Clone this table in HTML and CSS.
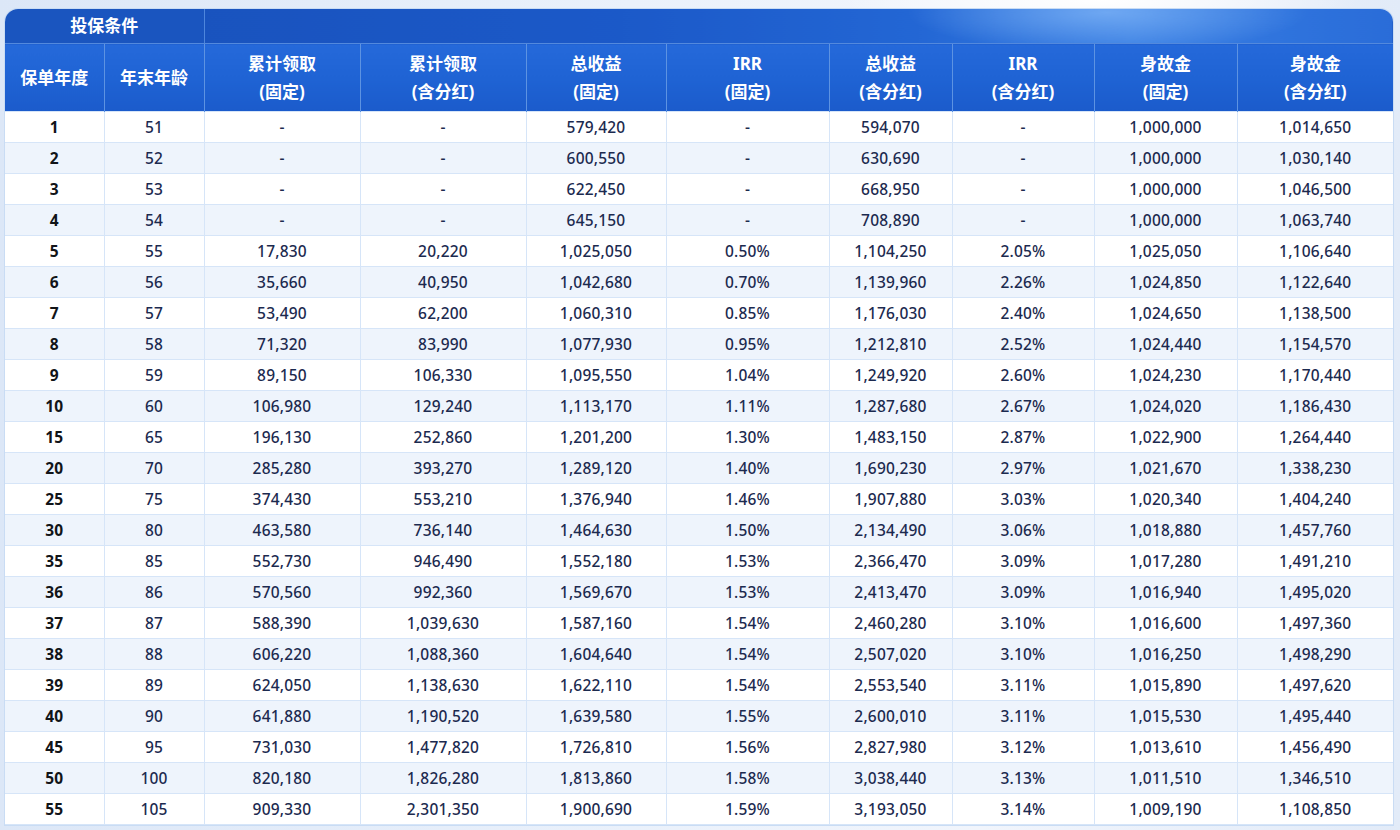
FILE: index.html
```html
<!DOCTYPE html>
<html lang="zh">
<head>
<meta charset="utf-8">
<link rel="stylesheet" href="styles.css">
</head>
<body>
<div class="page">
  <div class="card">
    <table class="grid">
      <colgroup>
        <col class="c1"><col class="c2"><col class="c3"><col class="c4"><col class="c5">
        <col class="c6"><col class="c7"><col class="c8"><col class="c9"><col class="c10">
      </colgroup>
      <thead>
        <tr class="h1">
          <th colspan="2" class="cond">投保条件</th>
          <th colspan="8" class="blank"></th>
        </tr>
        <tr class="h2">
          <th>保单年度</th>
          <th>年末年龄</th>
          <th>累计领取<br>(固定)</th>
          <th>累计领取<br>(含分红)</th>
          <th>总收益<br>(固定)</th>
          <th>IRR<br>(固定)</th>
          <th>总收益<br>(含分红)</th>
          <th>IRR<br>(含分红)</th>
          <th>身故金<br>(固定)</th>
          <th>身故金<br>(含分红)</th>
        </tr>
      </thead>
      <tbody>
        <tr><td>1</td><td>51</td><td>-</td><td>-</td><td>579,420</td><td>-</td><td>594,070</td><td>-</td><td>1,000,000</td><td>1,014,650</td></tr>
        <tr><td>2</td><td>52</td><td>-</td><td>-</td><td>600,550</td><td>-</td><td>630,690</td><td>-</td><td>1,000,000</td><td>1,030,140</td></tr>
        <tr><td>3</td><td>53</td><td>-</td><td>-</td><td>622,450</td><td>-</td><td>668,950</td><td>-</td><td>1,000,000</td><td>1,046,500</td></tr>
        <tr><td>4</td><td>54</td><td>-</td><td>-</td><td>645,150</td><td>-</td><td>708,890</td><td>-</td><td>1,000,000</td><td>1,063,740</td></tr>
        <tr><td>5</td><td>55</td><td>17,830</td><td>20,220</td><td>1,025,050</td><td>0.50%</td><td>1,104,250</td><td>2.05%</td><td>1,025,050</td><td>1,106,640</td></tr>
        <tr><td>6</td><td>56</td><td>35,660</td><td>40,950</td><td>1,042,680</td><td>0.70%</td><td>1,139,960</td><td>2.26%</td><td>1,024,850</td><td>1,122,640</td></tr>
        <tr><td>7</td><td>57</td><td>53,490</td><td>62,200</td><td>1,060,310</td><td>0.85%</td><td>1,176,030</td><td>2.40%</td><td>1,024,650</td><td>1,138,500</td></tr>
        <tr><td>8</td><td>58</td><td>71,320</td><td>83,990</td><td>1,077,930</td><td>0.95%</td><td>1,212,810</td><td>2.52%</td><td>1,024,440</td><td>1,154,570</td></tr>
        <tr><td>9</td><td>59</td><td>89,150</td><td>106,330</td><td>1,095,550</td><td>1.04%</td><td>1,249,920</td><td>2.60%</td><td>1,024,230</td><td>1,170,440</td></tr>
        <tr><td>10</td><td>60</td><td>106,980</td><td>129,240</td><td>1,113,170</td><td>1.11%</td><td>1,287,680</td><td>2.67%</td><td>1,024,020</td><td>1,186,430</td></tr>
        <tr><td>15</td><td>65</td><td>196,130</td><td>252,860</td><td>1,201,200</td><td>1.30%</td><td>1,483,150</td><td>2.87%</td><td>1,022,900</td><td>1,264,440</td></tr>
        <tr><td>20</td><td>70</td><td>285,280</td><td>393,270</td><td>1,289,120</td><td>1.40%</td><td>1,690,230</td><td>2.97%</td><td>1,021,670</td><td>1,338,230</td></tr>
        <tr><td>25</td><td>75</td><td>374,430</td><td>553,210</td><td>1,376,940</td><td>1.46%</td><td>1,907,880</td><td>3.03%</td><td>1,020,340</td><td>1,404,240</td></tr>
        <tr><td>30</td><td>80</td><td>463,580</td><td>736,140</td><td>1,464,630</td><td>1.50%</td><td>2,134,490</td><td>3.06%</td><td>1,018,880</td><td>1,457,760</td></tr>
        <tr><td>35</td><td>85</td><td>552,730</td><td>946,490</td><td>1,552,180</td><td>1.53%</td><td>2,366,470</td><td>3.09%</td><td>1,017,280</td><td>1,491,210</td></tr>
        <tr><td>36</td><td>86</td><td>570,560</td><td>992,360</td><td>1,569,670</td><td>1.53%</td><td>2,413,470</td><td>3.09%</td><td>1,016,940</td><td>1,495,020</td></tr>
        <tr><td>37</td><td>87</td><td>588,390</td><td>1,039,630</td><td>1,587,160</td><td>1.54%</td><td>2,460,280</td><td>3.10%</td><td>1,016,600</td><td>1,497,360</td></tr>
        <tr><td>38</td><td>88</td><td>606,220</td><td>1,088,360</td><td>1,604,640</td><td>1.54%</td><td>2,507,020</td><td>3.10%</td><td>1,016,250</td><td>1,498,290</td></tr>
        <tr><td>39</td><td>89</td><td>624,050</td><td>1,138,630</td><td>1,622,110</td><td>1.54%</td><td>2,553,540</td><td>3.11%</td><td>1,015,890</td><td>1,497,620</td></tr>
        <tr><td>40</td><td>90</td><td>641,880</td><td>1,190,520</td><td>1,639,580</td><td>1.55%</td><td>2,600,010</td><td>3.11%</td><td>1,015,530</td><td>1,495,440</td></tr>
        <tr><td>45</td><td>95</td><td>731,030</td><td>1,477,820</td><td>1,726,810</td><td>1.56%</td><td>2,827,980</td><td>3.12%</td><td>1,013,610</td><td>1,456,490</td></tr>
        <tr><td>50</td><td>100</td><td>820,180</td><td>1,826,280</td><td>1,813,860</td><td>1.58%</td><td>3,038,440</td><td>3.13%</td><td>1,011,510</td><td>1,346,510</td></tr>
        <tr><td>55</td><td>105</td><td>909,330</td><td>2,301,350</td><td>1,900,690</td><td>1.59%</td><td>3,193,050</td><td>3.14%</td><td>1,009,190</td><td>1,108,850</td></tr>
      </tbody>
    </table>
  </div>
</div>
</body>
</html>
```

FILE: styles.css
```css
html, body {
  margin: 0;
  padding: 0;
}
body {
  width: 1400px;
  height: 830px;
  overflow: hidden;
  background:
    radial-gradient(ellipse 260px 40px at 1100px 0px, #ffffff 0%, rgba(255,255,255,0) 100%),
    linear-gradient(90deg, #dce7f7 0%, #eaf1fb 45%, #f1f5fc 70%, #e2ebf8 100%);
  font-family: "Noto Sans", "Noto Sans CJK SC", sans-serif;
}
.page {
  padding: 9px 7px 0 5px;
}
.card {
  width: 1388px;
  border-radius: 13px 13px 0 0;
  overflow: hidden;
  background: #fff;
  box-shadow: 0 0 0 1px #c9dcf4;
}
.grid {
  width: 1388px;
  border-collapse: collapse;
  table-layout: fixed;
}
.c1 { width: 99px; }
.c2 { width: 100px; }
.c3 { width: 156px; }
.c4 { width: 166px; }
.c5 { width: 140px; }
.c6 { width: 163px; }
.c7 { width: 123px; }
.c8 { width: 142px; }
.c9 { width: 143px; }
.c10 { width: 156px; }

.grid th {
  color: #fff;
  font-weight: 700;
  font-size: 17px;
  padding: 0;
  text-align: center;
}
.h1 th {
  height: 34px;
  background:
    radial-gradient(ellipse 200px 40px at 76% 10%, rgba(120,175,245,0.85) 0%, rgba(120,175,245,0) 100%),
    linear-gradient(90deg, #1953be 0%, #1b59c8 35%, #2366d4 60%, #3a7fe2 78%, #2e72dc 92%, #2a6cd8 100%);
  border-bottom: 1px solid #5389dd;
}
.h1 .cond {
  background: #1a55bf;
  border-right: 1px solid #4e86dc;
  line-height: 34px;
}
.h2 th {
  height: 67px;
  line-height: 28px;
  background: linear-gradient(180deg, #2569da 0%, #1f63d4 50%, #1b5bcb 100%);
  border-left: 1px solid #5d93e2;
  border-right: 1px solid #5d93e2;
}
.h2 th:first-child { border-left: none; }
.h2 th:last-child { border-right: none; }

.grid td {
  height: 30px;
  padding: 0;
  text-align: center;
  font-size: 15.5px;
  font-weight: 500;
  color: #1c2a4f;
  border: 1px solid #d6e5f8;
  letter-spacing: 0.2px;
}
.grid td:first-child {
  font-weight: 700;
  color: #111418;
  border-left: none;
}
.grid td:last-child {
  border-right: none;
}
.grid tbody tr:nth-child(even) td {
  background: #eef4fc;
}
.grid tbody tr:nth-child(odd) td {
  background: #ffffff;
}
```
